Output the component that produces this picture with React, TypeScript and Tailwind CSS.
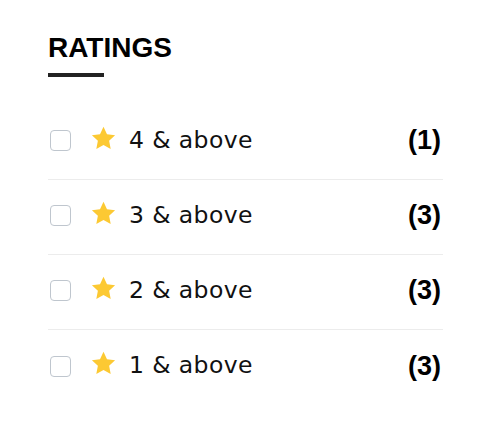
const ratings = [
  { stars: 4, count: 1 },
  { stars: 3, count: 3 },
  { stars: 2, count: 3 },
  { stars: 1, count: 3 },
];

function Star() {
  return (
    <svg viewBox="0 0 24 24" className="h-[27px] w-[27px]" aria-hidden="true">
      <path
        d="M12 1.6l3.1 6.6 7.2.9-5.3 5 1.4 7.2L12 17.8l-6.4 3.5 1.4-7.2-5.3-5 7.2-.9z"
        fill="#fcc933"
      />
    </svg>
  );
}

export default function App() {
  return (
    <div className="min-h-[428px] w-[500px] bg-white pl-[48px] pt-[34px] [font-family:'DejaVu_Sans',sans-serif]">
      <h2 className="text-[28px] font-bold leading-[28px] text-black [font-family:'Liberation_Sans',Arial,sans-serif]">
        RATINGS
      </h2>
      <div className="mt-[11px] h-[4px] w-[56px] bg-[#222]" />
      <ul className="mt-[28px] w-[395px]">
        {ratings.map((r, i) => (
          <li
            key={r.stars}
            className={`flex h-[75px] items-center pb-[3px] ${
              i < ratings.length - 1 ? "border-b border-[#ececec]" : ""
            }`}
          >
            <span className="ml-[2px] h-[21px] w-[21px] rounded-[4px] border-[1.5px] border-[#bfc6ce] bg-white" />
            <span className="ml-[19px] -mt-[5px]">
              <Star />
            </span>
            <span className="ml-[12px] text-[23.5px] tracking-[0.4px] text-[#111]">
              {r.stars} &amp; above
            </span>
            <span className="ml-auto mr-[2px] text-[27px] font-bold text-black [font-family:'Liberation_Sans',Arial,sans-serif]">
              ({r.count})
            </span>
          </li>
        ))}
      </ul>
    </div>
  );
}
